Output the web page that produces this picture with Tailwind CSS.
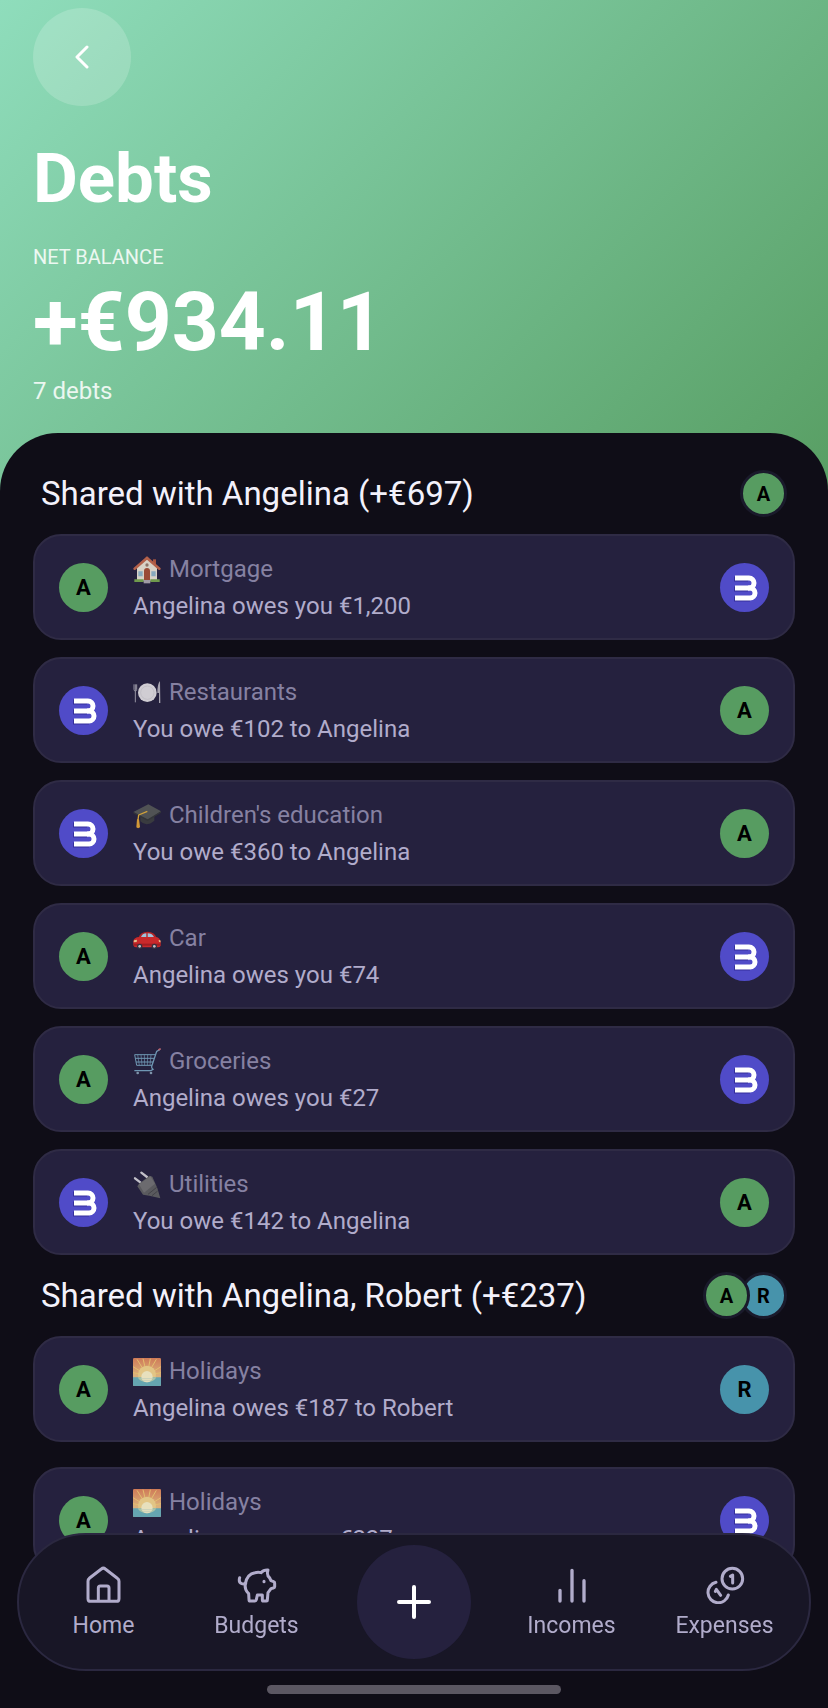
<!DOCTYPE html>
<html lang="en">
<head>
    <meta charset="UTF-8">
    <meta name="viewport" content="width=device-width, initial-scale=1.0">
    <title>Debts</title>
    <script src="https://cdn.jsdelivr.net/npm/@tailwindcss/browser@4"></script>
</head>
<body class="bg-[#0f0d17] min-h-screen font-['Roboto',sans-serif] text-[#b1accb]">

    <!-- Shared drawings -->
    <svg class="absolute size-0" aria-hidden="true">
        <symbol id="logo" viewBox="0 0 49 49">
            <g fill="none" stroke-width="5">
                <path d="M14 16H28M14 26H28M14 36H30" stroke="#352e9c"/>
                <g stroke="#fff">
                    <path d="M15 15H29a5 5 0 0 1 0 10H15"/>
                    <path d="M28 25h2a5 5 0 0 1 0 10H15"/>
                </g>
            </g>
        </symbol>
        <symbol id="house" viewBox="0 0 84 84">
            <path d="M60 10h9v18h-9z" fill="#a8553f"/>
            <path d="M12 34L42 8l30 26v40H12z" fill="#d8d2c6"/>
            <path d="M42 6L5 38" stroke="#b4614a" stroke-width="8" stroke-linecap="round"/>
            <path d="M42 6l37 32" stroke="#b4614a" stroke-width="8" stroke-linecap="round"/>
            <path d="M16 46h13v15H16zM55 46h13v15H55z" fill="#86a9bd"/>
            <path d="M33 45a9 9 0 0 1 18 0v28H33z" fill="#9a4a35"/>
            <circle cx="42" cy="27" r="5" fill="#8c7468"/>
            <path d="M4 70h28v8H4zM52 70h28v8H52z" fill="#6f9a4c"/>
            <path d="M32 72h20v10H32z" fill="#a09aa6"/>
        </symbol>
        <symbol id="plate" viewBox="0 0 84 84">
            <circle cx="43" cy="41" r="28" fill="#d0cdd3"/>
            <circle cx="43" cy="41" r="20" fill="none" stroke="#bbb8c0" stroke-width="2"/>
            <path d="M3 16v15q0 5 4 5t4-5V16M7 16v54" fill="none" stroke="#9693a2" stroke-width="3"/>
            <path d="M81 6q-8 8-8 36h5v30h4z" fill="#a5a2ae"/>
        </symbol>
        <symbol id="cap" viewBox="0 0 84 84">
            <path d="M22 36v22q18 18 42-2V36z" fill="#393b3f"/>
            <path d="M1 30L46 7l38 21-40 27z" fill="#505254"/>
            <path d="M1 30l43 22 40-24v4L44 57 1 34z" fill="#333539"/>
            <path d="M43 28L17 39l-2 15" fill="none" stroke="#d1a23a" stroke-width="4" stroke-linejoin="round"/>
            <path d="M12 52h6l3 24q-6 5-11 0z" fill="#d29837"/>
        </symbol>
        <symbol id="car" viewBox="0 0 84 84">
            <path d="M16 38Q22 20 44 20q20 0 27 18z" fill="#b32426"/>
            <path d="M23 38q5-13 17-13v13zM44 25q14 0 20 13H44z" fill="#9fc4dc"/>
            <path d="M1 48q2-11 18-12h50q13 2 14 16v10q-2 5-9 5H9q-7 0-8-7z" fill="#c8292b"/>
            <path d="M2 56h80v6H2z" fill="#9f1e22"/>
            <path d="M3 46l9-2-1 7-9 1zM77 45l5 1 1 6-5-1z" fill="#e2c08a"/>
            <circle cx="20" cy="64" r="8" fill="#353340"/>
            <circle cx="20" cy="64" r="4" fill="#c1bfc8"/>
            <circle cx="64" cy="64" r="8" fill="#353340"/>
            <circle cx="64" cy="64" r="4" fill="#c1bfc8"/>
        </symbol>
        <symbol id="cart" viewBox="0 0 84 84">
            <g fill="none" stroke="#6f97b3" stroke-width="4">
                <path d="M80 5l-9 5-15 45q-1 6 4 9l-6 4H4"/>
                <path d="M5 20h62M5 20l6 32h46M7 31h56M9 42h51" stroke-width="3"/>
                <path d="M14 20l5 32M24 20l3 32M34 20l1 32M44 20l-1 32M54 20l-3 32" stroke-width="2"/>
            </g>
            <path d="M76 6l7-4" stroke="#b1636f" stroke-width="5"/>
            <circle cx="14" cy="75" r="4" fill="#7e94aa"/>
            <circle cx="54" cy="75" r="4" fill="#7e94aa"/>
        </symbol>
        <symbol id="plug" viewBox="0 0 84 84">
            <path d="M6 22l17 13M25 5l17 13" stroke="#c2c0c9" stroke-width="7" stroke-linecap="round"/>
            <path d="M13 46l5-8 32-24 8 3 15 34 9 31-33-8-19-3z" fill="#5a5a5e"/>
            <path d="M18 40l34-24 14 22-33 27z" fill="#6c6b6f"/>
            <path d="M45 70l26-21M57 74l17-14" stroke="#434247" stroke-width="3"/>
        </symbol>
        <symbol id="sunrise" viewBox="0 0 84 84">
            <linearGradient id="sky" x1="0" y1="0" x2="0" y2="1">
                <stop offset="0" stop-color="#cf7a57"/>
                <stop offset="0.6" stop-color="#dbb07b"/>
            </linearGradient>
            <rect width="84" height="84" rx="4" fill="url(#sky)"/>
            <path d="M42 52L0 26M42 52L12 4M42 52L30 2M42 52L52 2M42 52L70 4M42 52L84 26M42 52L0 44M42 52L84 44" stroke="#e3bf6f" stroke-width="3"/>
            <circle cx="42" cy="50" r="27" fill="#e2c585"/>
            <path d="M0 58h84v22a4 4 0 0 1-4 4H4a4 4 0 0 1-4-4z" fill="#65a5b0"/>
            <path d="M14 58h56q-6 13-28 15-22-2-28-15z" fill="#a9c3a9"/>
            <circle cx="42" cy="56" r="17" fill="#e7e0bd"/>
            <path d="M26 62h32M30 68h24" stroke="#b8c9b8" stroke-width="2"/>
        </symbol>
    </svg>

    <!-- Header -->
    <header class="bg-linear-135 from-[#8fddbc] to-[#589e63] px-[33px] pt-2 pb-[88px] text-white">
        <button type="button" aria-label="Back" class="flex size-[98px] items-center justify-center rounded-full bg-white/18">
            <svg class="h-6 w-4" viewBox="0 0 16 24" fill="none" stroke="currentColor" stroke-width="3" stroke-linecap="round" stroke-linejoin="round"><path d="M13 2L3 12l10 10"/></svg>
        </button>
        <h1 class="mt-8 text-[69px] leading-[82px] font-bold">Debts</h1>
        <p class="mt-[25px] text-xl leading-6 text-white/85">NET BALANCE</p>
        <p class="mt-[5px] text-[82px] leading-24 font-bold">+€934.11</p>
        <p class="mt-[5px] text-2xl leading-8 text-white/85">7 debts</p>
    </header>

    <!-- Debts list -->
    <main class="relative -mt-[62px] rounded-t-[58px] bg-[#0f0d17] px-[33px] pt-5 pb-[135px]">
        <section>
            <div class="flex h-[81px] items-center justify-between px-2">
                <h2 class="text-[33px] leading-10 text-[#f3f1fb]">Shared with Angelina (+€697)</h2>
                <div class="flex">
                    <span class="flex size-[47px] items-center justify-center rounded-full border-3 border-[#1a1a2b] bg-[#579c61] text-xl font-bold text-black">A</span>
                </div>
            </div>
            <ul class="flex flex-col gap-[17px]">
                <li class="flex h-[106px] items-center gap-[25px] rounded-[28px] border-2 border-[#2f2b45] bg-[#25213e] px-6">
                    <span class="flex size-[49px] items-center justify-center rounded-full bg-[#579c61] text-[22px] font-bold text-black">A</span>
                    <div class="flex-1 pt-0.5 text-2xl leading-[37px]">
                        <p class="flex items-center gap-2 text-[#8681a2]"><svg class="size-7"><use href="#house"/></svg>Mortgage</p>
                        <p>Angelina owes you €1,200</p>
                    </div>
                    <svg class="size-[49px] rounded-full bg-[#504bc8]"><use href="#logo"/></svg>
                </li>
                <li class="flex h-[106px] items-center gap-[25px] rounded-[28px] border-2 border-[#2f2b45] bg-[#25213e] px-6">
                    <svg class="size-[49px] rounded-full bg-[#504bc8]"><use href="#logo"/></svg>
                    <div class="flex-1 pt-0.5 text-2xl leading-[37px]">
                        <p class="flex items-center gap-2 text-[#8681a2]"><svg class="size-7"><use href="#plate"/></svg>Restaurants</p>
                        <p>You owe €102 to Angelina</p>
                    </div>
                    <span class="flex size-[49px] items-center justify-center rounded-full bg-[#579c61] text-[22px] font-bold text-black">A</span>
                </li>
                <li class="flex h-[106px] items-center gap-[25px] rounded-[28px] border-2 border-[#2f2b45] bg-[#25213e] px-6">
                    <svg class="size-[49px] rounded-full bg-[#504bc8]"><use href="#logo"/></svg>
                    <div class="flex-1 pt-0.5 text-2xl leading-[37px]">
                        <p class="flex items-center gap-2 text-[#8681a2]"><svg class="size-7"><use href="#cap"/></svg>Children's education</p>
                        <p>You owe €360 to Angelina</p>
                    </div>
                    <span class="flex size-[49px] items-center justify-center rounded-full bg-[#579c61] text-[22px] font-bold text-black">A</span>
                </li>
                <li class="flex h-[106px] items-center gap-[25px] rounded-[28px] border-2 border-[#2f2b45] bg-[#25213e] px-6">
                    <span class="flex size-[49px] items-center justify-center rounded-full bg-[#579c61] text-[22px] font-bold text-black">A</span>
                    <div class="flex-1 pt-0.5 text-2xl leading-[37px]">
                        <p class="flex items-center gap-2 text-[#8681a2]"><svg class="size-7"><use href="#car"/></svg>Car</p>
                        <p>Angelina owes you €74</p>
                    </div>
                    <svg class="size-[49px] rounded-full bg-[#504bc8]"><use href="#logo"/></svg>
                </li>
                <li class="flex h-[106px] items-center gap-[25px] rounded-[28px] border-2 border-[#2f2b45] bg-[#25213e] px-6">
                    <span class="flex size-[49px] items-center justify-center rounded-full bg-[#579c61] text-[22px] font-bold text-black">A</span>
                    <div class="flex-1 pt-0.5 text-2xl leading-[37px]">
                        <p class="flex items-center gap-2 text-[#8681a2]"><svg class="size-7"><use href="#cart"/></svg>Groceries</p>
                        <p>Angelina owes you €27</p>
                    </div>
                    <svg class="size-[49px] rounded-full bg-[#504bc8]"><use href="#logo"/></svg>
                </li>
                <li class="flex h-[106px] items-center gap-[25px] rounded-[28px] border-2 border-[#2f2b45] bg-[#25213e] px-6">
                    <svg class="size-[49px] rounded-full bg-[#504bc8]"><use href="#logo"/></svg>
                    <div class="flex-1 pt-0.5 text-2xl leading-[37px]">
                        <p class="flex items-center gap-2 text-[#8681a2]"><svg class="size-7"><use href="#plug"/></svg>Utilities</p>
                        <p>You owe €142 to Angelina</p>
                    </div>
                    <span class="flex size-[49px] items-center justify-center rounded-full bg-[#579c61] text-[22px] font-bold text-black">A</span>
                </li>
            </ul>
        </section>

        <section>
            <div class="flex h-[81px] items-center justify-between px-2">
                <h2 class="text-[33px] leading-10 text-[#f3f1fb]">Shared with Angelina, Robert (+€237)</h2>
                <div class="flex">
                    <span class="z-1 flex size-[47px] items-center justify-center rounded-full border-3 border-[#1a1a2b] bg-[#579c61] text-xl font-bold text-black">A</span>
                    <span class="-ml-[10px] flex size-[47px] items-center justify-center rounded-full border-3 border-[#1a1a2b] bg-[#4793ab] text-xl font-bold text-black">R</span>
                </div>
            </div>
            <ul class="flex flex-col gap-[25px]">
                <li class="flex h-[106px] items-center gap-[25px] rounded-[28px] border-2 border-[#2f2b45] bg-[#25213e] px-6">
                    <span class="flex size-[49px] items-center justify-center rounded-full bg-[#579c61] text-[22px] font-bold text-black">A</span>
                    <div class="flex-1 pt-0.5 text-2xl leading-[37px]">
                        <p class="flex items-center gap-2 text-[#8681a2]"><svg class="size-7"><use href="#sunrise"/></svg>Holidays</p>
                        <p>Angelina owes €187 to Robert</p>
                    </div>
                    <span class="flex size-[49px] items-center justify-center rounded-full bg-[#4793ab] text-[22px] font-bold text-black">R</span>
                </li>
                <li class="flex h-[106px] items-center gap-[25px] rounded-[28px] border-2 border-[#2f2b45] bg-[#25213e] px-6">
                    <span class="flex size-[49px] items-center justify-center rounded-full bg-[#579c61] text-[22px] font-bold text-black">A</span>
                    <div class="flex-1 pt-0.5 text-2xl leading-[37px]">
                        <p class="flex items-center gap-2 text-[#8681a2]"><svg class="size-7"><use href="#sunrise"/></svg>Holidays</p>
                        <p>Angelina owes you €237</p>
                    </div>
                    <svg class="size-[49px] rounded-full bg-[#504bc8]"><use href="#logo"/></svg>
                </li>
            </ul>
        </section>
    </main>

    <!-- Tab bar -->
    <footer class="fixed inset-x-0 bottom-0 px-[17px] pb-[14px]">
        <nav class="grid h-[138px] grid-cols-[1fr_162px_1fr] items-center rounded-full border-2 border-[#2b2840] bg-[#181626] px-2">
            <div class="flex text-[23px] leading-7">
                <a href="#" class="flex flex-1 flex-col items-center gap-2">
                    <svg class="size-10" viewBox="0 0 120 120" fill="none" stroke="currentColor" stroke-width="9" stroke-linejoin="round"><path d="M12 52q0-6 5-10L52 15q6-5 12 0l35 27q6 4 6 10v52q0 8-8 8H20q-8 0-8-8z"/><path d="M43 112V72q0-6 6-6h20q6 0 6 6v40"/></svg>
                    Home
                </a>
                <a href="#" class="flex flex-1 flex-col items-center gap-2">
                    <svg class="size-10" viewBox="0 -6 120 120" fill="none" stroke="currentColor" stroke-width="9" stroke-linecap="round" stroke-linejoin="round"><path d="M8 35Q4 50 14 53q6 2 12-1"/><path d="M25 53Q30 24 54 20q10-2 18 0Q80 11 93 12q-4 10 0 18 6 5 9 14l8 3q3 1 3 5v10q0 3-4 4l-7 2-9 12-2 22q0 3-3 3H79q-3 0-3-4V87H61l-3 14q-1 4-4 4H40q-4 0-4-4l-1-18Q22 70 25 53z"/><path d="M81 46v1"/></svg>
                    Budgets
                </a>
            </div>
            <button type="button" aria-label="Add" class="flex size-[114px] items-center justify-center justify-self-center rounded-full bg-[#25213e] text-white">
                <svg class="size-9" viewBox="0 0 36 36" stroke="currentColor" stroke-width="4" stroke-linecap="round"><path d="M18 3v30M3 18h30"/></svg>
            </button>
            <div class="flex text-[23px] leading-7">
                <a href="#" class="flex flex-1 flex-col items-center gap-2">
                    <svg class="size-10" viewBox="0 0 120 120" stroke="currentColor" stroke-width="10" stroke-linecap="round"><path d="M24 79v32M60 19v92M96 50v61"/></svg>
                    Incomes
                </a>
                <a href="#" class="flex flex-1 flex-col items-center gap-2">
                    <svg class="size-10" viewBox="0 -4 120 120" fill="none" stroke="currentColor" stroke-width="9" stroke-linecap="round" stroke-linejoin="round"><circle cx="82" cy="40" r="31"/><path d="M76 33l7-4v24"/><path d="M33 51A31 31 0 1 0 70 89"/><path d="M31 78l3-6 13 18"/></svg>
                    Expenses
                </a>
            </div>
        </nav>
        <div class="mx-auto mt-[14px] h-[9px] w-[294px] rounded-full bg-[#5b5762]"></div>
    </footer>
</body>
</html>
